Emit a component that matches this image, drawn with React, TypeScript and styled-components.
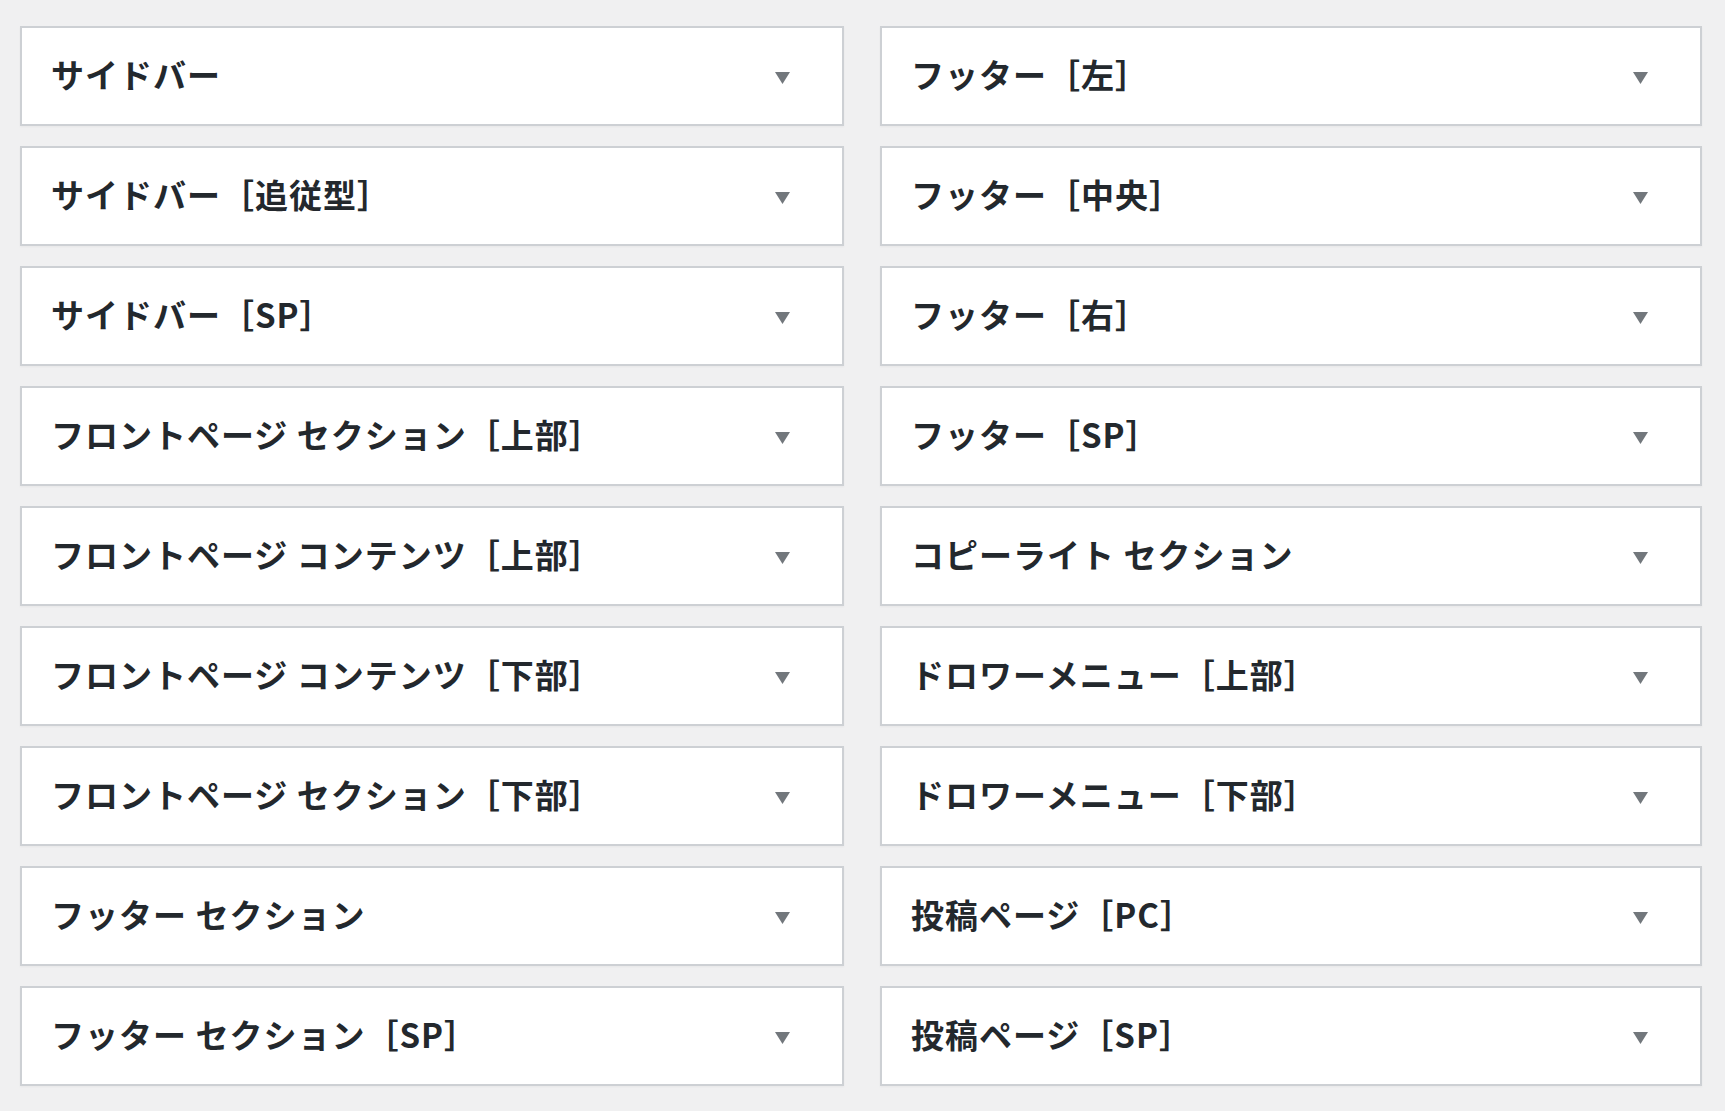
import React from "react";
import styled, { createGlobalStyle } from "styled-components";

const Global = createGlobalStyle`
  html, body {
    margin: 0;
    padding: 0;
    background: #f0f0f1;
  }
  body {
    font-family: "Noto Sans CJK JP", "Noto Sans", sans-serif;
  }
`;

const Page = styled.div`
  padding: 26px 0 0 20px;
  min-height: 1111px;
  box-sizing: border-box;
`;

const Grid = styled.div`
  display: grid;
  grid-template-columns: 824px 822px;
  grid-auto-rows: 100px;
  column-gap: 36px;
  row-gap: 20px;
`;

const Column = styled.div`
  display: contents;
`;

const Panel = styled.div<{ $col: number; $row: number }>`
  grid-column: ${(p) => p.$col};
  grid-row: ${(p) => p.$row};
  display: flex;
  align-items: center;
  justify-content: space-between;
  box-sizing: border-box;
  background: #ffffff;
  border: 2px solid #cdd0d4;
  box-shadow: 0 1px 2px rgba(0, 0, 0, 0.04);
  padding: 0 52px 0 29px;
`;

const Title = styled.h3`
  margin: -4px 0 0 0;
  font-family: "Noto Sans CJK JP", "Noto Sans", sans-serif;
  font-weight: 700;
  font-size: 33px;
  letter-spacing: 1px;
  line-height: 1;
  color: #23282d;
  white-space: nowrap;
`;

const Arrow = styled.svg`
  width: 15px;
  height: 12px;
  margin-top: 4px;
  flex: none;
`;

const left = [
  "サイドバー",
  "サイドバー［追従型］",
  "サイドバー［SP］",
  "フロントページ セクション［上部］",
  "フロントページ コンテンツ［上部］",
  "フロントページ コンテンツ［下部］",
  "フロントページ セクション［下部］",
  "フッター セクション",
  "フッター セクション［SP］",
];

const right = [
  "フッター［左］",
  "フッター［中央］",
  "フッター［右］",
  "フッター［SP］",
  "コピーライト セクション",
  "ドロワーメニュー［上部］",
  "ドロワーメニュー［下部］",
  "投稿ページ［PC］",
  "投稿ページ［SP］",
];

const Toggle = () => (
  <Arrow viewBox="0 0 15 12" aria-hidden="true">
    <polygon points="0,0 15,0 7.5,12" fill="#72777c" />
  </Arrow>
);

export default function App() {
  return (
    <>
      <Global />
      <Page>
        <Grid>
          <Column>
            {left.map((t, i) => (
              <Panel key={t} $col={1} $row={i + 1}>
                <Title>{t}</Title>
                <Toggle />
              </Panel>
            ))}
          </Column>
          <Column>
            {right.map((t, i) => (
              <Panel key={t} $col={2} $row={i + 1}>
                <Title>{t}</Title>
                <Toggle />
              </Panel>
            ))}
          </Column>
        </Grid>
      </Page>
    </>
  );
}
